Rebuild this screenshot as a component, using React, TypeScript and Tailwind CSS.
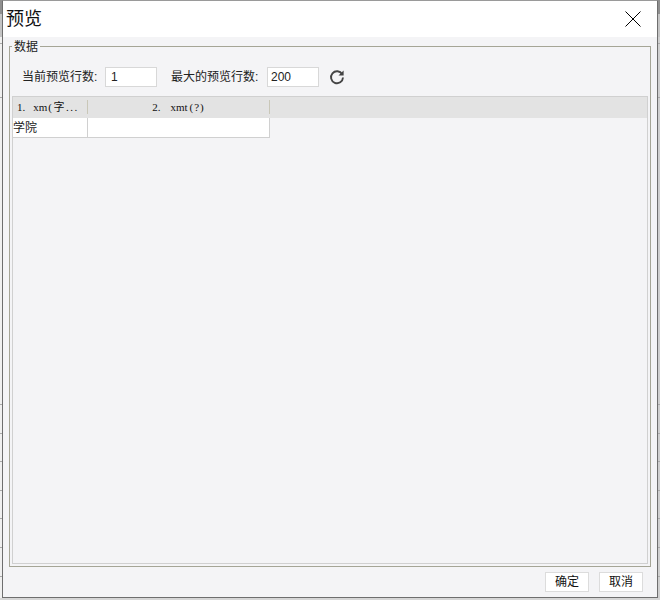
const CJK = "font-['Liberation_Sans','Noto_Sans_CJK_SC',sans-serif]";

function RefreshIcon() {
  return (
    <svg width="16" height="16" viewBox="0 0 16 16" fill="none" className="text-[#444]">
      <path d="M13.2 5.2A6 6 0 1 0 14 8.5" stroke="currentColor" strokeWidth="1.9" />
      <path d="M14.6 1.4v5.1H9.5z" fill="currentColor" />
    </svg>
  );
}

function CloseIcon() {
  return (
    <svg width="16" height="16" viewBox="0 0 16 16" className="text-black">
      <path d="M.5.5l15 15M15.5.5l-15 15" stroke="currentColor" strokeWidth="1" />
    </svg>
  );
}

function HeaderCell({ index, name, type, className, nameClass, typeClass }: { index: string; name: string; type: string; className: string; nameClass: string; typeClass: string }) {
  return (
    <div className={`flex h-[14px] items-center whitespace-nowrap border-r border-[#c9c7b8] font-['Liberation_Serif','Noto_Sans_CJK_SC',serif] text-[11px] text-[#111] ${className}`}>
      <span>{index}</span>
      <span className={nameClass}>{name}</span>
      <span className={typeClass}>{type}</span>
    </div>
  );
}

export default function App() {
  return (
    <div className={`h-[600px] w-[660px] overflow-hidden bg-[linear-gradient(to_bottom,#8f8f8f_14px,#c4c4c4_14px,#c4c4c4_37px,transparent_37px,transparent_43px,#aaa_43px,#aaa_44px,transparent_44px,transparent_97px,#aaa_97px,#aaa_98px,transparent_98px,transparent_404px,#aaa_404px,#aaa_405px,transparent_405px,transparent_433px,#aaa_433px,#aaa_434px,transparent_434px,transparent_461px,#aaa_461px,#aaa_462px,transparent_462px,transparent_490px,#aaa_490px,#aaa_491px,transparent_491px,transparent_518px,#aaa_518px,#aaa_519px,transparent_519px,transparent_547px,#aaa_547px,#aaa_548px,transparent_548px,transparent_576px,#aaa_576px,#aaa_577px,transparent_577px,transparent_598px,#d6d6d6_598px),linear-gradient(to_right,#f0f0f0_658px,#cfcfcf_658px)] pl-[2px] text-[12px] text-[#222] ${CJK}`}>
      <div className="flex h-[598px] w-[656px] flex-col border border-[#6e6e6e] border-t-[#9a9a9a] bg-[#f4f4f6]">
        {/* Title */}
        <div className="flex h-[36px] shrink-0 items-center justify-between bg-white pl-[3px] pr-[16px]">
          <span className="text-[18px] leading-none text-[#111]">预览</span>
          <CloseIcon />
        </div>

        {/* Data group */}
        <fieldset className="mx-[6px] mt-[2px] flex h-[528px] min-h-0 flex-col border border-[#a5a596] px-[2px] pb-[2px]">
          <legend className="ml-0 px-[2px] pt-[1px] text-[12px] leading-[14px]">数据</legend>
          <div className="flex h-[42px] shrink-0 items-center pl-[10px] pt-[4px]">
            <span className="w-[75px] whitespace-nowrap">当前预览行数:</span>
            <input readOnly value="1" className="ml-[8px] h-[20px] w-[52px] border border-[#d8d8d8] bg-white pl-[5px] text-[12px] outline-none" />
            <span className="ml-[14px] w-[88px] whitespace-nowrap">最大的预览行数:</span>
            <input readOnly value="200" className="ml-[8px] h-[20px] w-[52px] border border-[#d8d8d8] bg-white pl-[3px] text-[12px] outline-none" />
            <div className="ml-[10px] mt-[-1px] flex items-center"><RefreshIcon /></div>
          </div>

          <div className="flex min-h-0 flex-1 flex-col border border-[#d0d0d0]">
            <div className="flex h-[21px] shrink-0 items-start bg-[#e3e3e3] pt-[3px]">
              <HeaderCell index="1." name="xm" type="(字..." className="w-[75px] pl-[4px]" nameClass="ml-[8px]" typeClass="ml-[1px] tracking-[1.5px]" />
              <HeaderCell index="2." name="xmt" type="(?)" className="w-[182px] justify-center" nameClass="ml-[10px]" typeClass="ml-[2px] tracking-[1px]" />
            </div>
            <div className="flex h-[20px] w-[257px] items-center border-b border-r border-[#d0d0d0] bg-white">
              <div className="flex h-full w-[75px] items-center border-r border-[#d0d0d0]">学院</div>
            </div>
          </div>
        </fieldset>

        {/* Footer */}
        <div className="flex flex-1 items-center justify-end gap-[10px] pr-[14px]">
          <button className="h-[20px] w-[44px] border border-[#dcdcdc] bg-white text-[12px] text-[#111]">确定</button>
          <button className="h-[20px] w-[44px] border border-[#dcdcdc] bg-white text-[12px] text-[#111]">取消</button>
        </div>
      </div>
    </div>
  );
}
